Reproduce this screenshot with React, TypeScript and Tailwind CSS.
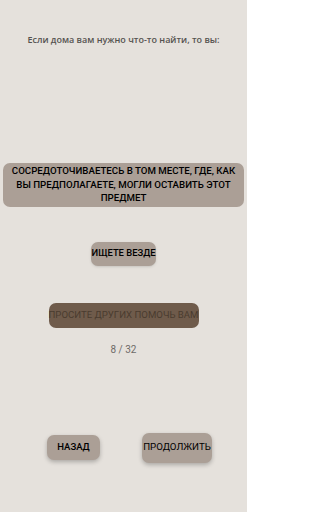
import React from "react";

const App = () => {
  return (
    <div className="w-[247px] h-[512px] bg-[#e5e1dc] flex flex-col overflow-hidden font-['Roboto',sans-serif]">
      <div className="pt-[33px] text-center text-[9px] leading-[14px] font-semibold text-[#555350] font-['Open_Sans',sans-serif]">
        Если дома вам нужно что-то найти, то вы:
      </div>

      <div className="mt-[116px] mx-[3px] rounded-[7px] bg-[#ab9f96] px-0.5 pt-[1px] pb-[2px] text-center text-[9.7px] leading-[13.5px] font-medium text-black">
        СОСРЕДОТОЧИВАЕТЕСЬ В ТОМ МЕСТЕ, ГДЕ, КАК ВЫ ПРЕДПОЛАГАЕТЕ, МОГЛИ ОСТАВИТЬ ЭТОТ ПРЕДМЕТ
      </div>

      <div className="mt-[35px] flex justify-center">
        <button className="w-[65px] h-[24px] rounded-[7px] bg-[#ab9f96] text-[9.4px] font-medium text-black whitespace-nowrap flex items-center justify-center shadow-sm">
          ИЩЕТЕ ВЕЗДЕ
        </button>
      </div>

      <div className="mt-[37px] flex justify-center">
        <button className="w-[150px] h-[25px] rounded-[7px] bg-[#6f5b4b] text-[9.6px] text-[#4a3b2f] whitespace-nowrap flex items-center justify-center">
          ПРОСИТЕ ДРУГИХ ПОМОЧЬ ВАМ
        </button>
      </div>

      <div className="mt-[16px] text-center text-[10px] leading-[12px] text-[#6e6b68]">
        8 / 32
      </div>

      <div className="mt-[77px] flex items-center pl-[47px] gap-[42px]">
        <button className="w-[53px] h-[25px] rounded-[7px] bg-[#ab9f96] text-[9.5px] font-medium text-black flex items-center justify-center shadow-[0_2px_4px_rgba(0,0,0,0.25)]">
          НАЗАД
        </button>
        <button className="w-[70px] h-[30px] rounded-[7px] bg-[#ab9f96] text-[9.7px] text-black whitespace-nowrap flex items-center justify-center shadow-[0_2px_4px_rgba(0,0,0,0.25)]">
          ПРОДОЛЖИТЬ
        </button>
      </div>
    </div>
  );
};

export default App;
